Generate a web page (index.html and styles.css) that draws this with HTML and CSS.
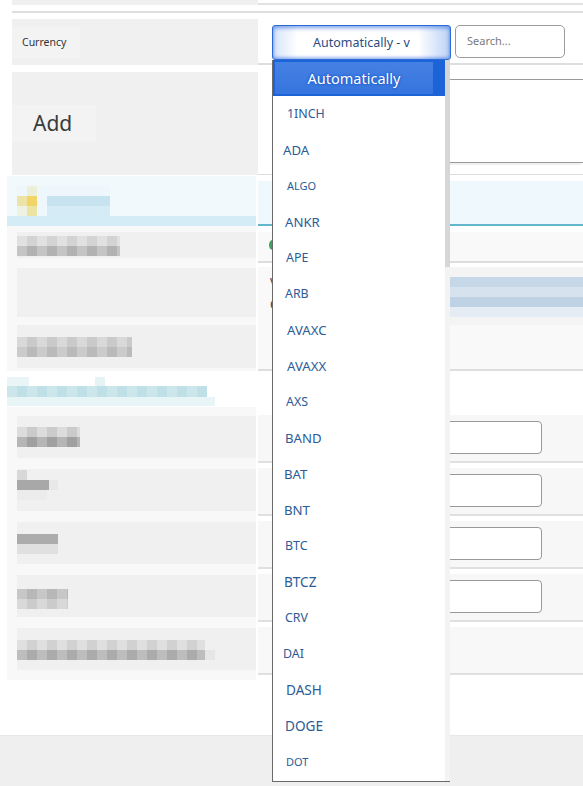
FILE: index.html
```html
<!DOCTYPE html>
<html lang="en">
<head>
<meta charset="utf-8">
<title>Currency settings</title>
<link rel="stylesheet" href="styles.css">
</head>
<body>
<div class="page">
  <div class="row top-row"><div class="lc"></div><div class="rc"></div></div>
  <div class="sep"></div>

  <div class="row cur-row">
    <div class="lc"><span class="lbl small">Currency</span></div>
    <div class="rc">
      <div class="select">Automatically - v</div>
      <div class="search">Search...</div>
    </div>
  </div>

  <div class="row add-row">
    <div class="lc"><span class="lbl big">Add</span></div>
    <div class="rc"><div class="textbox"></div></div>
  </div>

  <div class="lrow blue-row">
    <div class="llc"><div class="mz mz-blue"></div><div class="band"></div></div>
    <div class="lrc"></div>
  </div>

  <div class="lrow r1">
    <div class="llc"><div class="gray"><div class="mz mz-r1"></div></div></div>
    <div class="lrc"><span class="dot"></span></div>
  </div>

  <div class="lrow r23">
    <div class="llc">
      <div class="gray g2"></div>
      <div class="gray g3"><div class="mz mz-r3"></div></div>
    </div>
    <div class="lrc">
      <div class="peek"><span>V</span><span>C</span></div>
      <div class="mz mz-right"></div>
    </div>
  </div>

  <div class="head-row">
    <div class="mz mz-head"></div>
    <div class="strip"></div>
  </div>

  <div class="lrow irow">
    <div class="llc"><div class="gray"><div class="mz mz-i1"></div></div></div>
    <div class="lrc"><div class="input"></div></div>
  </div>
  <div class="lrow irow">
    <div class="llc"><div class="gray"><div class="mz mz-i2"></div></div></div>
    <div class="lrc"><div class="input"></div></div>
  </div>
  <div class="lrow irow">
    <div class="llc"><div class="gray"><div class="mz mz-i3"></div></div></div>
    <div class="lrc"><div class="input"></div></div>
  </div>
  <div class="lrow irow">
    <div class="llc"><div class="gray"><div class="mz mz-i4"></div></div></div>
    <div class="lrc"><div class="input"></div></div>
  </div>
  <div class="lrow irow last">
    <div class="llc"><div class="gray"><div class="mz mz-i5"></div></div></div>
    <div class="lrc"></div>
  </div>

  <div class="footer"></div>

  <div class="dropdown">
    <ul class="dd-list">
      <li class="dd-sel"><span>Automatically</span></li>
      <li class="md r2">1INCH</li>
      <li class="l2">ADA</li>
      <li class="sm r2">ALGO</li>
      <li>ANKR</li>
      <li class="md r1">APE</li>
      <li class="md">ARB</li>
      <li class="r2">AVAXC</li>
      <li class="r2">AVAXX</li>
      <li class="md r1">AXS</li>
      <li>BAND</li>
      <li class="l1">BAT</li>
      <li class="l1">BNT</li>
      <li class="md">BTC</li>
      <li class="lg l1">BTCZ</li>
      <li class="md">CRV</li>
      <li class="md l2">DAI</li>
      <li class="lg r1">DASH</li>
      <li class="lg">DOGE</li>
      <li class="sm r1">DOT</li>
    </ul>
    <div class="dd-scroll"><div class="thumb"></div></div>
  </div>
</div>
</body>
</html>
```

FILE: styles.css
```css
* { box-sizing: border-box; }
html, body { margin: 0; padding: 0; background: #fff; }
body { font-family: "Noto Sans", "Open Sans", sans-serif; color: #333; }

.page { position: relative; width: 583px; height: 786px; overflow: hidden; background: #fff; }

.row { display: flex; }
.row .lc { margin-left: 12px; width: 246px; background: #f0f0f0; flex: none; }
.row .rc { flex: 1; }

.top-row { height: 5px; }
.top-row .rc { height: 5px; border-bottom: 2px solid #e2e2e2; }
.sep { margin: 6px 0 6px 12px; height: 2px; background: #dedede; }

.lbl { display: inline-block; background: #f3f3f3; color: #333; }
.lbl.small { margin-top: 8px; height: 31px; line-height: 31px; padding: 0 14px 0 10px; font-size: 10.5px; }
.lbl.big { margin-top: 33px; height: 37px; line-height: 36px; padding: 0 24px 0 21px; font-size: 21px; color: #3a3a3a; }

.cur-row { height: 46px; }
.cur-row .rc { display: flex; align-items: flex-start; padding: 6px 0 0 14px; border-bottom: 2px solid #dedede; }
.select {
  width: 179px; height: 35px; border: 1px solid #2c6bd3; border-radius: 3px;
  background: linear-gradient(90deg, #d6e4fa 0, #fff 14%, #fff 82%, #bcd2f6 100%);
  box-shadow: inset 0 2px 4px rgba(40, 100, 220, .6), inset 0 -2px 3px rgba(40, 100, 220, .4);
  text-align: center; line-height: 33px; font-size: 12.5px; color: #2b4c82;
}
.search {
  margin-left: 4px; width: 110px; height: 33px; border: 1px solid #9c9c9c; border-radius: 5px;
  padding-left: 11px; line-height: 30px; font-size: 11px; color: #7a7a7a; background: #fff;
}

.add-row { height: 103px; margin-top: 7px; }
.add-row .rc { padding-top: 7px; border-bottom: 1px solid #dcdcdc; }
.textbox { margin-left: 16px; height: 84px; border: 1px solid #9a9a9a; border-right: none; background: #fff; box-shadow: 0 4px 0 -2px #f0f0f0; }

.lrow { display: flex; padding-left: 7px; }
.llc { width: 249px; flex: none; background: #f8f8f8; }
.lrc { flex: 1; margin-left: 2px; }
.gray { margin-left: 10px; background: #f0f0f0; }

.blue-row { height: 50px; margin-top: 1px; }
.blue-row .llc { background: #f1f9fd; display: flex; flex-direction: column; padding-top: 10px; }
.blue-row .mz-blue { margin-left: 10px; }
.band { margin-top: auto; height: 10px; background: #d4ecf6; }
.blue-row .lrc { margin-top: 5px; background: #eef8fd; border-bottom: 2px solid #62b6cd; }

.r1 { height: 37px; }
.r1 .llc { padding-top: 6px; }
.r1 .gray { height: 26px; padding-top: 4px; }
.r1 .lrc { margin-top: 6px; height: 31px; background: #f9f9f9; border-bottom: 2px solid #dedede; padding: 8px 0 0 11px; }
.dot { display: block; width: 7px; height: 10px; border-radius: 50%; background: #3fa45b; }

.r23 { height: 108px; }
.r23 .llc { padding-top: 5px; }
.g2 { height: 49px; }
.g3 { height: 43px; margin-top: 8px; padding-top: 12px; }
.r23 .lrc { margin-top: 4px; height: 104px; background: #f9f9f9; border-bottom: 2px solid #dedede; display: flex; }
.peek { display: flex; flex-direction: column; margin: 5px 0 0 12px; width: 8px; font-size: 12px; line-height: 22px; color: #1d3b6e; }
.mz-right { margin-left: 159px; flex: 1; height: 58px; }

.head-row { height: 44px; padding: 6px 0 0 7px; }
.strip { width: 249px; height: 8px; background: #f8f8f8; }

.irow { height: 53px; }
.irow .gray { margin-top: 1px; height: 42px; }
.irow .lrc { height: 48px; background: #f7f7f7; border-bottom: 2px solid #e0e0e0; padding: 6px 0 0 142px; }
.irow.last .lrc { background: #f8f8f8; }
.input { width: 142px; height: 33px; border: 1px solid #999; border-radius: 4px; background: #fff; }

.footer { margin-top: 55px; height: 51px; background: #efefef; border-top: 1px solid #e6e6e6; }

/* mosaic (redacted) blocks */
.mz { position: relative; }
.mz-blue {
  width: 93px; height: 30px;
  background:
    linear-gradient(#f1d566, #f1d566) 10px 10px / 10px 10px no-repeat,
    linear-gradient(#eee3a6, #eee3a6) 0 10px / 10px 10px no-repeat,
    linear-gradient(#ebe4a4, #ebe4a4) 10px 20px / 10px 10px no-repeat,
    linear-gradient(#ecf0d8, #ecf0d8) 10px 0 / 10px 10px no-repeat,
    linear-gradient(#edf2e2, #edf2e2) 0 20px / 10px 10px no-repeat,
    linear-gradient(#c8e3f0, #c8e3f0) 30px 10px / 63px 10px no-repeat,
    linear-gradient(#d5ecf6, #d5ecf6) 30px 20px / 63px 10px no-repeat,
    #eef8fc;
}
.mz-r1 {
  width: 103px; height: 20px;
  background:
    repeating-linear-gradient(90deg, rgba(255,255,255,.18) 0 10px, rgba(0,0,0,.03) 10px 20px),
    linear-gradient(#dadada 0 10px, #b8b8b8 10px 20px);
}
.mz-r3 {
  width: 115px; height: 20px;
  background:
    repeating-linear-gradient(90deg, rgba(255,255,255,.15) 0 10px, rgba(0,0,0,.04) 10px 20px),
    linear-gradient(#d2d2d2 0 10px, #c2c2c2 10px 20px);
}
.mz-right {
  background: linear-gradient(#f4f4f4 0 10px, #c6d8e8 10px 20px, #d6e2ed 20px 30px, #bed2e4 30px 40px, #e5ecf4 40px 50px, #f4f4f4 50px 58px);
}
.mz-head {
  width: 208px; height: 30px;
  background:
    linear-gradient(#e9f5f7, #e9f5f7) 0 0 / 22px 9px no-repeat,
    linear-gradient(#e6f3f5, #e6f3f5) 88px 0 / 10px 9px no-repeat,
    repeating-linear-gradient(90deg, rgba(255,255,255,.2) 0 10px, rgba(0,0,0,0) 10px 20px) 0 9px / 200px 11px no-repeat,
    linear-gradient(#bfe0e6, #bfe0e6) 0 9px / 200px 11px no-repeat,
    linear-gradient(#e8f5f7, #e8f5f7) 0 20px / 208px 9px no-repeat;
}
.irow .gray { padding-top: 11px; }
.mz-i1 {
  width: 63px; height: 20px;
  background:
    repeating-linear-gradient(90deg, rgba(255,255,255,.15) 0 10px, rgba(0,0,0,.05) 10px 20px),
    linear-gradient(#d6d6d6 0 10px, #a9a9a9 10px 20px);
}
.mz-i2 {
  width: 41px; height: 30px; margin-top: -10px;
  background:
    linear-gradient(#d8d8d8, #d8d8d8) 0 0 / 10px 10px no-repeat,
    linear-gradient(#a8a8a8, #a8a8a8) 0 10px / 32px 10px no-repeat,
    linear-gradient(#e8e8e8, #e8e8e8) 32px 10px / 9px 10px no-repeat,
    linear-gradient(#ececec, #ececec) 0 20px / 30px 10px no-repeat;
}
.mz-i3 {
  width: 41px; height: 20px; margin-top: 1px;
  background: linear-gradient(#acacac 0 10px, #e0e0e0 10px 20px);
}
.mz-i4 {
  width: 51px; height: 20px; margin-top: 3px;
  background:
    repeating-linear-gradient(90deg, rgba(255,255,255,.15) 0 10px, rgba(0,0,0,.03) 10px 20px),
    linear-gradient(#bdbdbd 0 10px, #d2d2d2 10px 20px);
}
.mz-i5 {
  width: 198px; height: 20px; margin-top: 1px;
  background:
    repeating-linear-gradient(90deg, rgba(255,255,255,.15) 0 10px, rgba(0,0,0,.04) 10px 20px) 0 0 / 188px 20px no-repeat,
    linear-gradient(#dadada, #dadada) 0 0 / 188px 10px no-repeat,
    linear-gradient(#b2b2b2, #b2b2b2) 0 10px / 188px 10px no-repeat,
    linear-gradient(#e6e6e6, #e6e6e6) 188px 10px / 10px 10px no-repeat;
}

/* dropdown menu overlay */
.dropdown {
  position: absolute; left: 272px; top: 60px; width: 178px; height: 722px;
  display: flex; background: #fff;
  border-left: 1px solid #6a6a6a; border-bottom: 1px solid #6a6a6a;
}
.dd-list { list-style: none; margin: 0; padding: 0; flex: 1; }
.dd-list li {
  height: 36px; line-height: 36px; padding-left: 12px;
  font-size: 13.2px; color: #2d5b96; white-space: nowrap;
}
.dd-list li.sm { font-size: 11px; }
.dd-list li.md { font-size: 12.4px; }
.dd-list li.lg { font-size: 13.6px; }
.dd-list li.l1 { padding-left: 11px; }
.dd-list li.l2 { padding-left: 10px; }
.dd-list li.r1 { padding-left: 13px; }
.dd-list li.r2 { padding-left: 14px; }
.dd-list li.dd-sel {
  padding: 2px 12px 2px 2px; line-height: 32px;
  background: #1d63d8;
}
.dd-sel span {
  display: block; text-align: center; font-size: 14.5px; color: #fff;
  background: linear-gradient(#4581e4, #3674de);
  text-shadow: 0 0 3px #1b56c4, 0 0 2px #1b56c4;
}
.dd-scroll { width: 5px; background: #f3f3f3; }
.thumb { height: 207px; background: #d6d6d6; }
```
